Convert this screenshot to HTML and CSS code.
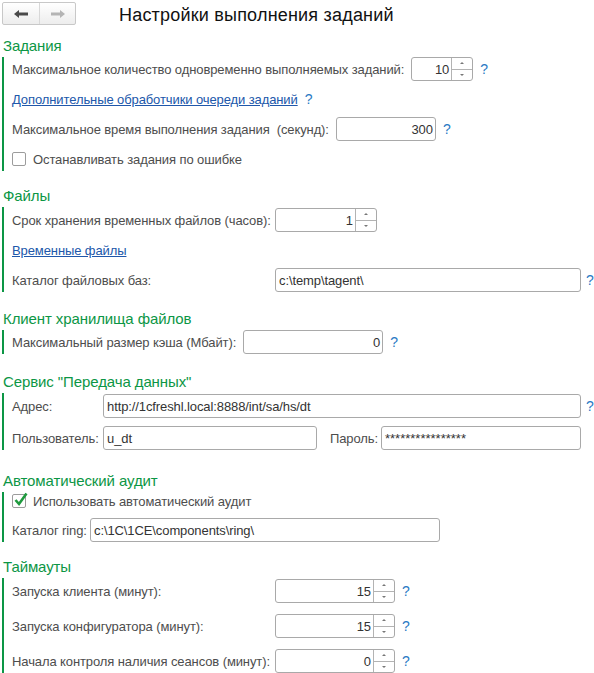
FILE: index.html
```html
<!DOCTYPE html>
<html lang="ru">
<head>
<meta charset="utf-8">
<title>Настройки выполнения заданий</title>
<link rel="stylesheet" href="styles.css">
</head>
<body>
<div class="header">
  <div class="nav">
    <span class="navbtn"><svg width="14" height="8" viewBox="0 0 14 8"><polygon points="0,4 5,0 5,8" fill="#4a4a4a"/><rect x="4" y="2.5" width="10" height="3" fill="#4a4a4a"/></svg></span>
    <span class="navbtn navsep"><svg width="14" height="8" viewBox="0 0 14 8"><polygon points="14,4 9,0 9,8" fill="#b4b4b4"/><rect x="0" y="2.5" width="10" height="3" fill="#b4b4b4"/></svg></span>
  </div>
  <h1 class="title">Настройки выполнения заданий</h1>
</div>

<div class="section">
  <div class="heading">Задания</div>
  <div class="group">
    <div class="row">
      <span class="label">Максимальное количество одновременно выполняемых заданий:</span>
      <div class="field w62"><span class="val num">10</span><span class="spinner"><i class="up"></i><i class="down"></i></span></div>
      <span class="help">?</span>
    </div>
    <div class="row">
      <a class="link" href="#">Дополнительные обработчики очереди заданий</a>
      <span class="help">?</span>
    </div>
    <div class="row">
      <span class="label">Максимальное время выполнения задания&nbsp; (секунд):</span>
      <div class="field w100"><span class="val num">300</span></div>
      <span class="help">?</span>
    </div>
    <div class="row">
      <span class="check"></span>
      <span class="checklabel">Останавливать задания по ошибке</span>
    </div>
  </div>
</div>

<div class="section sp13">
  <div class="heading">Файлы</div>
  <div class="group pt1">
    <div class="row">
      <span class="label lw263">Срок хранения временных файлов (часов):</span>
      <div class="field w102"><span class="val num">1</span><span class="spinner"><i class="up"></i><i class="down"></i></span></div>
    </div>
    <div class="row">
      <a class="link" href="#">Временные файлы</a>
    </div>
    <div class="row">
      <span class="label lw263">Каталог файловых баз:</span>
      <div class="field w306"><span class="val">c:\temp\tagent\</span></div>
      <span class="help edge">?</span>
    </div>
  </div>
</div>

<div class="section sp15">
  <div class="heading">Клиент хранилища файлов</div>
  <div class="group">
    <div class="row">
      <span class="label">Максимальный размер кэша (Мбайт):</span>
      <div class="field w140"><span class="val num">0</span></div>
      <span class="help">?</span>
    </div>
  </div>
</div>

<div class="section sp16">
  <div class="heading">Сервис "Передача данных"</div>
  <div class="group g8 pt1">
    <div class="row">
      <span class="label lw91">Адрес:</span>
      <div class="field w478"><span class="val">http://1cfreshl.local:8888/int/sa/hs/dt</span></div>
      <span class="help edge">?</span>
    </div>
    <div class="row">
      <span class="label lw91">Пользователь:</span>
      <div class="field w214"><span class="val">u_dt</span></div>
      <span class="label pass">Пароль:</span>
      <div class="field w200"><span class="val stars">****************</span></div>
    </div>
  </div>
</div>

<div class="section sp19">
  <div class="heading">Автоматический аудит</div>
  <div class="group g8">
    <div class="row short">
      <span class="check checked"><svg width="17" height="17" viewBox="0 0 17 17"><polyline points="3.5,8 7,12 14.5,1.5" fill="none" stroke="#1f9a3e" stroke-width="2.6"/></svg></span>
      <span class="checklabel">Использовать автоматический аудит</span>
    </div>
    <div class="row">
      <span class="label lw78">Каталог ring:</span>
      <div class="field w350"><span class="val">c:\1C\1CE\components\ring\</span></div>
    </div>
  </div>
</div>

<div class="section sp13">
  <div class="heading">Таймауты</div>
  <div class="group g11 pt1">
    <div class="row">
      <span class="label lw263">Запуска клиента (минут):</span>
      <div class="field w120"><span class="val num">15</span><span class="spinner"><i class="up"></i><i class="down"></i></span></div>
      <span class="help">?</span>
    </div>
    <div class="row">
      <span class="label lw263">Запуска конфигуратора (минут):</span>
      <div class="field w120"><span class="val num">15</span><span class="spinner"><i class="up"></i><i class="down"></i></span></div>
      <span class="help">?</span>
    </div>
    <div class="row">
      <span class="label lw263">Начала контроля наличия сеансов (минут):</span>
      <div class="field w120"><span class="val num">0</span><span class="spinner"><i class="up"></i><i class="down"></i></span></div>
      <span class="help">?</span>
    </div>
  </div>
</div>
</body>
</html>
```
FILE: styles.css
```css
html, body {
  margin: 0;
  padding: 0;
  background: #fff;
}
body {
  font-family: "Liberation Sans", Arial, sans-serif;
  font-size: 13px;
  letter-spacing: -0.1px;
  color: #4d4d4d;
  overflow: hidden;
}
.header {
  display: flex;
  align-items: flex-start;
  height: 34px;
}
.nav {
  display: flex;
  margin: 2px 0 0 2px;
  height: 23px;
  box-sizing: border-box;
  border: 1px solid #c8c8c8;
  border-radius: 2px;
  background: linear-gradient(#ffffff, #ededed);
}
.navbtn {
  width: 36px;
  display: flex;
  align-items: center;
  justify-content: center;
}
.navsep {
  border-left: 1px solid #d8d8d8;
  width: 35px;
}
.title {
  margin: 4px 0 0 43px;
  font-size: 18px;
  letter-spacing: 0.2px;
  font-weight: normal;
  color: #111;
  line-height: 22px;
}
.section {
  margin-left: 2px;
}
.sp13 { margin-top: 13px; }
.sp15 { margin-top: 15px; }
.sp16 { margin-top: 16px; }
.sp19 { margin-top: 19px; }
.heading {
  font-size: 15px;
  line-height: 23px;
  height: 23px;
  color: #0c9645;
  padding-left: 1px;
}
.group {
  border-left: 2px solid #0c9645;
  padding-left: 8px;
  display: flex;
  flex-direction: column;
  gap: 6px;
}
.g8 { gap: 8px; }
.g11 { gap: 11px; }
.pt1 { padding-top: 1px; }
.row {
  display: flex;
  align-items: center;
  height: 24px;
}
.row.short { height: 18px; }
.label {
  flex: none;
  margin-right: 7px;
  white-space: nowrap;
}
.lw263 { width: 263px; margin-right: 0; }
.lw91 { width: 91px; margin-right: 0; }
.lw78 { width: 78px; margin-right: 0; }
.pass { margin-left: 13px; margin-right: 0; width: 51px; }
.field {
  flex: none;
  height: 24px;
  box-sizing: border-box;
  border: 1px solid #a9a9a9;
  border-radius: 3px;
  background: #fff;
  display: flex;
  align-items: stretch;
  color: #333;
}
.val {
  flex: 1;
  display: flex;
  align-items: center;
  padding: 0 3px;
  white-space: nowrap;
  overflow: hidden;
}
.val.num { justify-content: flex-end; padding-right: 2px; }
.stars { font-size: 13px; padding-top: 1px; letter-spacing: 0; }
.w62 { width: 62px; }
.w100 { width: 100px; }
.w102 { width: 102px; }
.w120 { width: 120px; }
.w140 { width: 140px; }
.w200 { width: 200px; }
.w214 { width: 214px; }
.w306 { width: 306px; }
.w350 { width: 350px; }
.w478 { width: 478px; }
.spinner {
  width: 20px;
  flex: none;
  border-left: 1px solid #b3b3b3;
  display: flex;
  flex-direction: column;
}
.spinner i {
  flex: 1;
  display: flex;
  align-items: center;
  justify-content: center;
}
.spinner i + i {
  border-top: 1px solid #b3b3b3;
}
.spinner i::after {
  content: "";
  width: 0;
  height: 0;
  border-left: 2px solid transparent;
  border-right: 2px solid transparent;
}
.spinner .up::after { border-bottom: 2px solid #777; }
.spinner .down::after { border-top: 2px solid #777; }
.help {
  margin-left: 7px;
  color: #2a7ac4;
  font-size: 14px;
  line-height: 15px;
}
.help.edge {
  margin-left: 5px;
}
.link {
  color: #2057aa;
  text-decoration: underline;
}
.check {
  width: 14px;
  height: 14px;
  box-sizing: border-box;
  border: 1px solid #9c9c9c;
  border-radius: 2px;
  background: #fff;
  position: relative;
  flex: none;
}
.check svg {
  position: absolute;
  left: -1px;
  top: -3px;
}
.checklabel {
  margin-left: 7px;
}
```
